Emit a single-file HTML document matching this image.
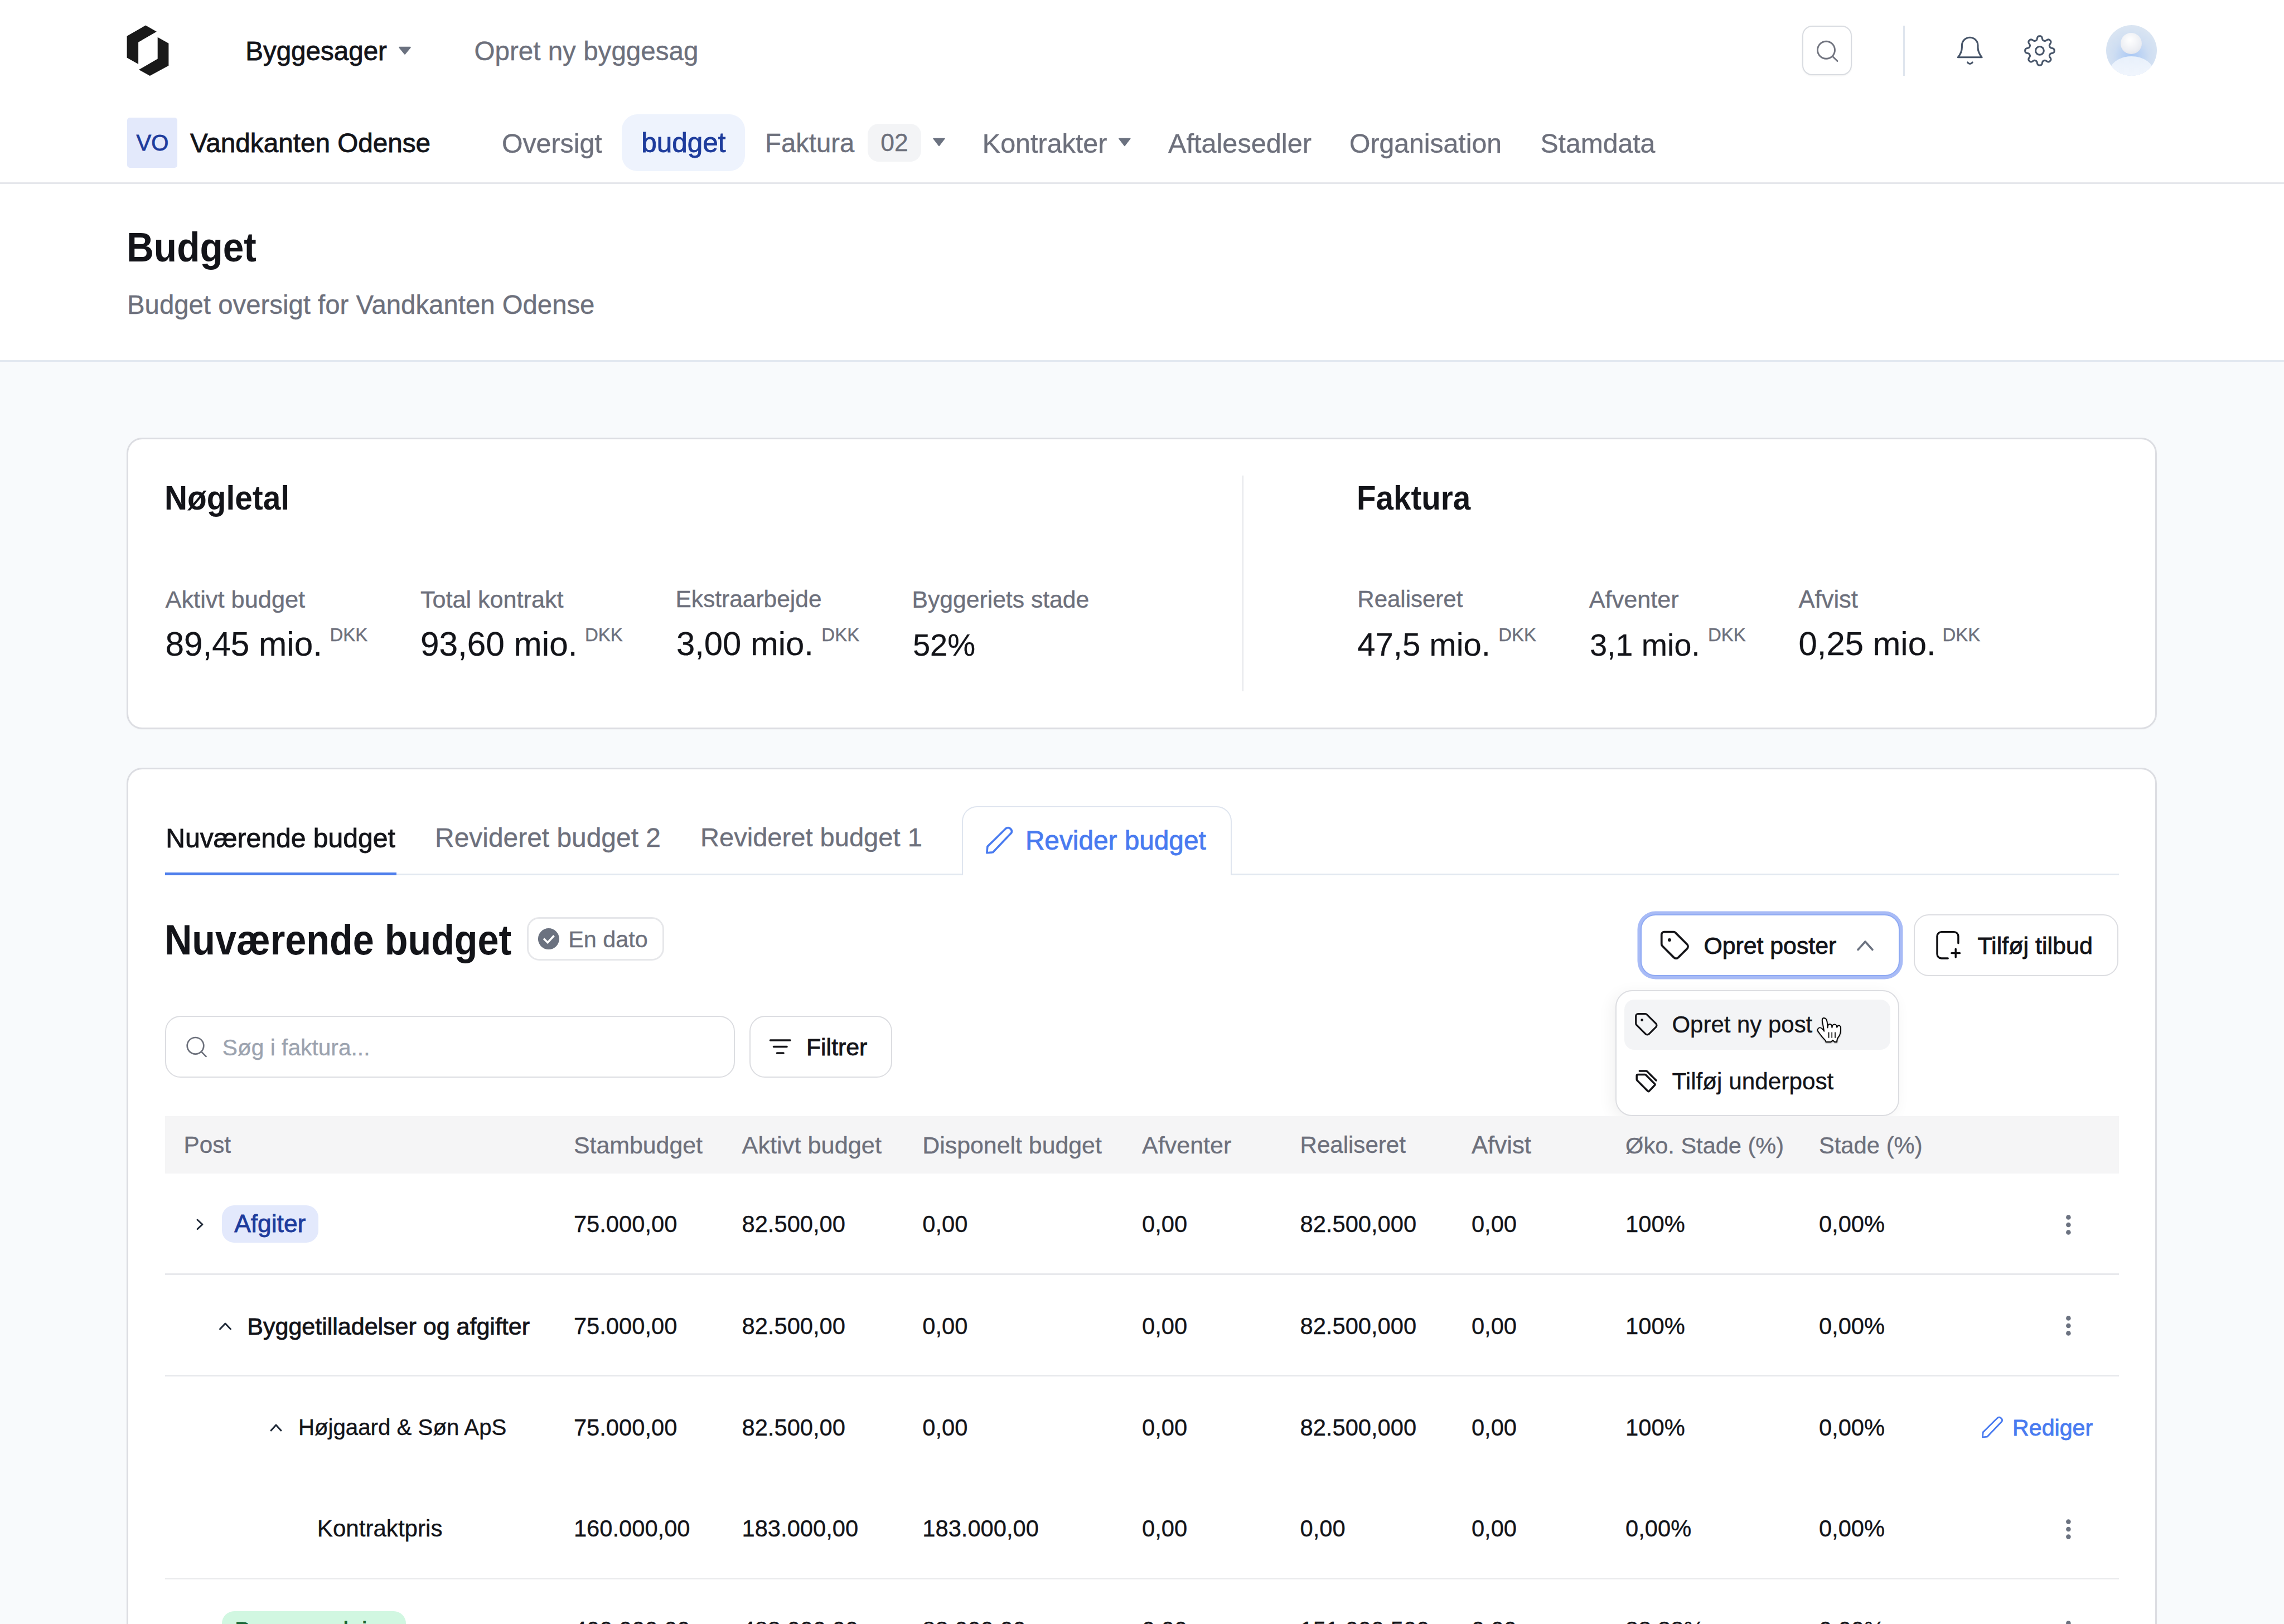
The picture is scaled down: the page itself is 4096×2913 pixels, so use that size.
<!DOCTYPE html>
<html><head><meta charset="utf-8"><style>
html,body{margin:0;padding:0;}
body{width:4096px;height:2913px;overflow:hidden;position:relative;background:#f8fafc;font-family:"Liberation Sans",sans-serif;}
.t{position:absolute;line-height:0;white-space:nowrap;height:0;z-index:6;}
.b{position:absolute;box-sizing:border-box;}
svg.b{overflow:visible;z-index:6;}
</style></head><body>
<div class="b" style="left:0.0px;top:0.0px;width:4096.0px;height:647.0px;background:#ffffff;"></div>
<div class="b" style="left:0.0px;top:327.0px;width:4096.0px;height:3.0px;background:#e5e7eb;"></div>
<div class="b" style="left:0.0px;top:645.5px;width:4096.0px;height:3.0px;background:#e2e8f0;"></div>
<svg class="b" style="left:0.0px;top:0.0px;" width="400.0" height="200.0" viewBox="0 0 400 200"><polygon fill="#1a1a1a" points="261.2,45.5 280.9,56.8 248.1,75.7 248.1,115.1 227.6,103.5 227.6,64.7"/><polygon fill="#1a1a1a" points="282.7,66.8 302.4,77.8 302.4,117.7 268.8,136.1 249.1,125.1 282.7,105.6"/></svg>
<div class="t" style="left:440.20px;top:91.82px;font-size:47.55px;color:#131419;-webkit-text-stroke:0.85px #131419;">Byggesager</div>
<svg class="b" style="left:700.0px;top:70.0px;" width="60.0" height="40.0" viewBox="700 70 60 40"><polygon fill="#6b7280" points="716.5,85 735.5,85 726,96.5" stroke="#6b7280" stroke-width="2.5" stroke-linejoin="round"/></svg>
<div class="t" style="left:850.40px;top:91.80px;font-size:47.60px;color:#6d707c;-webkit-text-stroke:0.40px #6d707c;">Opret ny byggesag</div>
<div class="b" style="left:3232.0px;top:46.0px;width:89.0px;height:89.0px;border:2.5px solid #d9dce1;border-radius:18px;background:#fff;box-shadow:0 1px 3px rgba(0,0,0,0.06);"></div>
<svg class="b" style="left:3200.0px;top:30.0px;" width="200.0" height="130.0" viewBox="3200 30 200 130"><circle cx="3275" cy="89.8" r="15.5" fill="none" stroke="#71747f" stroke-width="2.9"/><line x1="3286.5" y1="101.3" x2="3295" y2="109.5" stroke="#71747f" stroke-width="2.9" stroke-linecap="round"/></svg>
<div class="b" style="left:3413.0px;top:46.0px;width:3.0px;height:90.0px;background:#dfe5ee;"></div>
<svg class="b" style="left:3480.0px;top:40.0px;" width="120.0" height="100.0" viewBox="3480 40 120 100"><path d="M3511.4,102.7 H3554.1 M3511.4,102.7 C3516.5,96.5 3518.4,91 3518.4,85 V81.5 A14.3,14.3 0 0 1 3547,81.5 V85 C3547,91 3549,96.5 3554.1,102.7 M3528.5,111.9 Q3532.8,117 3537.2,111.9" fill="none" stroke="#475569" stroke-width="3.1" stroke-linecap="round" stroke-linejoin="round"/></svg>
<svg class="b" style="left:3600.0px;top:40.0px;" width="120.0" height="100.0" viewBox="3600 40 120 100"><polygon points="3684.10,90.90 3684.10,91.13 3684.09,91.36 3684.07,91.59 3684.05,91.81 3684.02,92.04 3683.98,92.27 3683.93,92.49 3683.87,92.72 3683.79,92.94 3683.71,93.16 3683.60,93.37 3683.47,93.59 3683.32,93.80 3683.14,94.00 3682.93,94.20 3682.69,94.38 3682.41,94.56 3682.09,94.73 3681.73,94.89 3681.34,95.03 3680.92,95.17 3680.48,95.29 3680.04,95.40 3679.60,95.51 3679.18,95.62 3678.79,95.72 3678.43,95.83 3678.10,95.94 3677.81,96.05 3677.56,96.17 3677.33,96.29 3677.14,96.42 3676.97,96.55 3676.82,96.68 3676.68,96.82 3676.57,96.96 3676.46,97.11 3676.36,97.26 3676.27,97.41 3676.19,97.56 3676.11,97.71 3676.03,97.86 3675.96,98.01 3675.89,98.17 3675.82,98.32 3675.76,98.48 3675.70,98.64 3675.64,98.80 3675.59,98.96 3675.54,99.12 3675.49,99.29 3675.45,99.46 3675.41,99.63 3675.39,99.81 3675.37,99.99 3675.37,100.19 3675.38,100.39 3675.40,100.60 3675.45,100.83 3675.52,101.08 3675.62,101.34 3675.75,101.62 3675.90,101.93 3676.08,102.26 3676.29,102.61 3676.51,102.98 3676.74,103.37 3676.97,103.76 3677.19,104.16 3677.40,104.55 3677.57,104.93 3677.71,105.29 3677.82,105.64 3677.89,105.97 3677.93,106.27 3677.94,106.56 3677.92,106.83 3677.88,107.08 3677.82,107.32 3677.74,107.55 3677.65,107.77 3677.55,107.98 3677.43,108.18 3677.31,108.37 3677.17,108.56 3677.03,108.74 3676.89,108.92 3676.74,109.09 3676.59,109.26 3676.43,109.43 3676.26,109.59 3676.09,109.74 3675.92,109.89 3675.74,110.03 3675.56,110.17 3675.37,110.31 3675.18,110.43 3674.98,110.55 3674.77,110.65 3674.55,110.74 3674.32,110.82 3674.08,110.88 3673.83,110.92 3673.56,110.94 3673.27,110.93 3672.97,110.89 3672.64,110.82 3672.29,110.71 3671.93,110.57 3671.55,110.40 3671.16,110.19 3670.76,109.97 3670.37,109.74 3669.98,109.51 3669.61,109.29 3669.26,109.08 3668.93,108.90 3668.62,108.75 3668.34,108.62 3668.08,108.52 3667.83,108.45 3667.60,108.40 3667.39,108.38 3667.19,108.37 3666.99,108.37 3666.81,108.39 3666.63,108.41 3666.46,108.45 3666.29,108.49 3666.12,108.54 3665.96,108.59 3665.80,108.64 3665.64,108.70 3665.48,108.76 3665.32,108.82 3665.17,108.89 3665.01,108.96 3664.86,109.03 3664.71,109.11 3664.56,109.19 3664.41,109.27 3664.26,109.36 3664.11,109.46 3663.96,109.57 3663.82,109.68 3663.68,109.82 3663.55,109.97 3663.42,110.14 3663.29,110.33 3663.17,110.56 3663.05,110.81 3662.94,111.10 3662.83,111.43 3662.72,111.79 3662.62,112.18 3662.51,112.60 3662.40,113.04 3662.29,113.48 3662.17,113.92 3662.03,114.34 3661.89,114.73 3661.73,115.09 3661.56,115.41 3661.38,115.69 3661.20,115.93 3661.00,116.14 3660.80,116.32 3660.59,116.47 3660.37,116.60 3660.16,116.71 3659.94,116.79 3659.72,116.87 3659.49,116.93 3659.27,116.98 3659.04,117.02 3658.81,117.05 3658.59,117.07 3658.36,117.09 3658.13,117.10 3657.90,117.10 3657.67,117.10 3657.44,117.09 3657.21,117.07 3656.99,117.05 3656.76,117.02 3656.53,116.98 3656.31,116.93 3656.08,116.87 3655.86,116.79 3655.64,116.71 3655.43,116.60 3655.21,116.47 3655.00,116.32 3654.80,116.14 3654.60,115.93 3654.42,115.69 3654.24,115.41 3654.07,115.09 3653.91,114.73 3653.77,114.34 3653.63,113.92 3653.51,113.48 3653.40,113.04 3653.29,112.60 3653.18,112.18 3653.08,111.79 3652.97,111.43 3652.86,111.10 3652.75,110.81 3652.63,110.56 3652.51,110.33 3652.38,110.14 3652.25,109.97 3652.12,109.82 3651.98,109.68 3651.84,109.57 3651.69,109.46 3651.54,109.36 3651.39,109.27 3651.24,109.19 3651.09,109.11 3650.94,109.03 3650.79,108.96 3650.63,108.89 3650.48,108.82 3650.32,108.76 3650.16,108.70 3650.00,108.64 3649.84,108.59 3649.68,108.54 3649.51,108.49 3649.34,108.45 3649.17,108.41 3648.99,108.39 3648.81,108.37 3648.61,108.37 3648.41,108.38 3648.20,108.40 3647.97,108.45 3647.72,108.52 3647.46,108.62 3647.18,108.75 3646.87,108.90 3646.54,109.08 3646.19,109.29 3645.82,109.51 3645.43,109.74 3645.04,109.97 3644.64,110.19 3644.25,110.40 3643.87,110.57 3643.51,110.71 3643.16,110.82 3642.83,110.89 3642.53,110.93 3642.24,110.94 3641.97,110.92 3641.72,110.88 3641.48,110.82 3641.25,110.74 3641.03,110.65 3640.82,110.55 3640.62,110.43 3640.43,110.31 3640.24,110.17 3640.06,110.03 3639.88,109.89 3639.71,109.74 3639.54,109.59 3639.37,109.43 3639.21,109.26 3639.06,109.09 3638.91,108.92 3638.77,108.74 3638.63,108.56 3638.49,108.37 3638.37,108.18 3638.25,107.98 3638.15,107.77 3638.06,107.55 3637.98,107.32 3637.92,107.08 3637.88,106.83 3637.86,106.56 3637.87,106.27 3637.91,105.97 3637.98,105.64 3638.09,105.29 3638.23,104.93 3638.40,104.55 3638.61,104.16 3638.83,103.76 3639.06,103.37 3639.29,102.98 3639.51,102.61 3639.72,102.26 3639.90,101.93 3640.05,101.62 3640.18,101.34 3640.28,101.08 3640.35,100.83 3640.40,100.60 3640.42,100.39 3640.43,100.19 3640.43,99.99 3640.41,99.81 3640.39,99.63 3640.35,99.46 3640.31,99.29 3640.26,99.12 3640.21,98.96 3640.16,98.80 3640.10,98.64 3640.04,98.48 3639.98,98.32 3639.91,98.17 3639.84,98.01 3639.77,97.86 3639.69,97.71 3639.61,97.56 3639.53,97.41 3639.44,97.26 3639.34,97.11 3639.23,96.96 3639.12,96.82 3638.98,96.68 3638.83,96.55 3638.66,96.42 3638.47,96.29 3638.24,96.17 3637.99,96.05 3637.70,95.94 3637.37,95.83 3637.01,95.72 3636.62,95.62 3636.20,95.51 3635.76,95.40 3635.32,95.29 3634.88,95.17 3634.46,95.03 3634.07,94.89 3633.71,94.73 3633.39,94.56 3633.11,94.38 3632.87,94.20 3632.66,94.00 3632.48,93.80 3632.33,93.59 3632.20,93.37 3632.09,93.16 3632.01,92.94 3631.93,92.72 3631.87,92.49 3631.82,92.27 3631.78,92.04 3631.75,91.81 3631.73,91.59 3631.71,91.36 3631.70,91.13 3631.70,90.90 3631.70,90.67 3631.71,90.44 3631.73,90.21 3631.75,89.99 3631.78,89.76 3631.82,89.53 3631.87,89.31 3631.93,89.08 3632.01,88.86 3632.09,88.64 3632.20,88.43 3632.33,88.21 3632.48,88.00 3632.66,87.80 3632.87,87.60 3633.11,87.42 3633.39,87.24 3633.71,87.07 3634.07,86.91 3634.46,86.77 3634.88,86.63 3635.32,86.51 3635.76,86.40 3636.20,86.29 3636.62,86.18 3637.01,86.08 3637.37,85.97 3637.70,85.86 3637.99,85.75 3638.24,85.63 3638.47,85.51 3638.66,85.38 3638.83,85.25 3638.98,85.12 3639.12,84.98 3639.23,84.84 3639.34,84.69 3639.44,84.54 3639.53,84.39 3639.61,84.24 3639.69,84.09 3639.77,83.94 3639.84,83.79 3639.91,83.63 3639.98,83.48 3640.04,83.32 3640.10,83.16 3640.16,83.00 3640.21,82.84 3640.26,82.68 3640.31,82.51 3640.35,82.34 3640.39,82.17 3640.41,81.99 3640.43,81.81 3640.43,81.61 3640.42,81.41 3640.40,81.20 3640.35,80.97 3640.28,80.72 3640.18,80.46 3640.05,80.18 3639.90,79.87 3639.72,79.54 3639.51,79.19 3639.29,78.82 3639.06,78.43 3638.83,78.04 3638.61,77.64 3638.40,77.25 3638.23,76.87 3638.09,76.51 3637.98,76.16 3637.91,75.83 3637.87,75.53 3637.86,75.24 3637.88,74.97 3637.92,74.72 3637.98,74.48 3638.06,74.25 3638.15,74.03 3638.25,73.82 3638.37,73.62 3638.49,73.43 3638.63,73.24 3638.77,73.06 3638.91,72.88 3639.06,72.71 3639.21,72.54 3639.37,72.37 3639.54,72.21 3639.71,72.06 3639.88,71.91 3640.06,71.77 3640.24,71.63 3640.43,71.49 3640.62,71.37 3640.82,71.25 3641.03,71.15 3641.25,71.06 3641.48,70.98 3641.72,70.92 3641.97,70.88 3642.24,70.86 3642.53,70.87 3642.83,70.91 3643.16,70.98 3643.51,71.09 3643.87,71.23 3644.25,71.40 3644.64,71.61 3645.04,71.83 3645.43,72.06 3645.82,72.29 3646.19,72.51 3646.54,72.72 3646.87,72.90 3647.18,73.05 3647.46,73.18 3647.72,73.28 3647.97,73.35 3648.20,73.40 3648.41,73.42 3648.61,73.43 3648.81,73.43 3648.99,73.41 3649.17,73.39 3649.34,73.35 3649.51,73.31 3649.68,73.26 3649.84,73.21 3650.00,73.16 3650.16,73.10 3650.32,73.04 3650.48,72.98 3650.63,72.91 3650.79,72.84 3650.94,72.77 3651.09,72.69 3651.24,72.61 3651.39,72.53 3651.54,72.44 3651.69,72.34 3651.84,72.23 3651.98,72.12 3652.12,71.98 3652.25,71.83 3652.38,71.66 3652.51,71.47 3652.63,71.24 3652.75,70.99 3652.86,70.70 3652.97,70.37 3653.08,70.01 3653.18,69.62 3653.29,69.20 3653.40,68.76 3653.51,68.32 3653.63,67.88 3653.77,67.46 3653.91,67.07 3654.07,66.71 3654.24,66.39 3654.42,66.11 3654.60,65.87 3654.80,65.66 3655.00,65.48 3655.21,65.33 3655.43,65.20 3655.64,65.09 3655.86,65.01 3656.08,64.93 3656.31,64.87 3656.53,64.82 3656.76,64.78 3656.99,64.75 3657.21,64.73 3657.44,64.71 3657.67,64.70 3657.90,64.70 3658.13,64.70 3658.36,64.71 3658.59,64.73 3658.81,64.75 3659.04,64.78 3659.27,64.82 3659.49,64.87 3659.72,64.93 3659.94,65.01 3660.16,65.09 3660.37,65.20 3660.59,65.33 3660.80,65.48 3661.00,65.66 3661.20,65.87 3661.38,66.11 3661.56,66.39 3661.73,66.71 3661.89,67.07 3662.03,67.46 3662.17,67.88 3662.29,68.32 3662.40,68.76 3662.51,69.20 3662.62,69.62 3662.72,70.01 3662.83,70.37 3662.94,70.70 3663.05,70.99 3663.17,71.24 3663.29,71.47 3663.42,71.66 3663.55,71.83 3663.68,71.98 3663.82,72.12 3663.96,72.23 3664.11,72.34 3664.26,72.44 3664.41,72.53 3664.56,72.61 3664.71,72.69 3664.86,72.77 3665.01,72.84 3665.17,72.91 3665.32,72.98 3665.48,73.04 3665.64,73.10 3665.80,73.16 3665.96,73.21 3666.12,73.26 3666.29,73.31 3666.46,73.35 3666.63,73.39 3666.81,73.41 3666.99,73.43 3667.19,73.43 3667.39,73.42 3667.60,73.40 3667.83,73.35 3668.08,73.28 3668.34,73.18 3668.62,73.05 3668.93,72.90 3669.26,72.72 3669.61,72.51 3669.98,72.29 3670.37,72.06 3670.76,71.83 3671.16,71.61 3671.55,71.40 3671.93,71.23 3672.29,71.09 3672.64,70.98 3672.97,70.91 3673.27,70.87 3673.56,70.86 3673.83,70.88 3674.08,70.92 3674.32,70.98 3674.55,71.06 3674.77,71.15 3674.98,71.25 3675.18,71.37 3675.37,71.49 3675.56,71.63 3675.74,71.77 3675.92,71.91 3676.09,72.06 3676.26,72.21 3676.43,72.37 3676.59,72.54 3676.74,72.71 3676.89,72.88 3677.03,73.06 3677.17,73.24 3677.31,73.43 3677.43,73.62 3677.55,73.82 3677.65,74.03 3677.74,74.25 3677.82,74.48 3677.88,74.72 3677.92,74.97 3677.94,75.24 3677.93,75.53 3677.89,75.83 3677.82,76.16 3677.71,76.51 3677.57,76.87 3677.40,77.25 3677.19,77.64 3676.97,78.04 3676.74,78.43 3676.51,78.82 3676.29,79.19 3676.08,79.54 3675.90,79.87 3675.75,80.18 3675.62,80.46 3675.52,80.72 3675.45,80.97 3675.40,81.20 3675.38,81.41 3675.37,81.61 3675.37,81.81 3675.39,81.99 3675.41,82.17 3675.45,82.34 3675.49,82.51 3675.54,82.68 3675.59,82.84 3675.64,83.00 3675.70,83.16 3675.76,83.32 3675.82,83.48 3675.89,83.63 3675.96,83.79 3676.03,83.94 3676.11,84.09 3676.19,84.24 3676.27,84.39 3676.36,84.54 3676.46,84.69 3676.57,84.84 3676.68,84.98 3676.82,85.12 3676.97,85.25 3677.14,85.38 3677.33,85.51 3677.56,85.63 3677.81,85.75 3678.10,85.86 3678.43,85.97 3678.79,86.08 3679.18,86.18 3679.60,86.29 3680.04,86.40 3680.48,86.51 3680.92,86.63 3681.34,86.77 3681.73,86.91 3682.09,87.07 3682.41,87.24 3682.69,87.42 3682.93,87.60 3683.14,87.80 3683.32,88.00 3683.47,88.21 3683.60,88.43 3683.71,88.64 3683.79,88.86 3683.87,89.08 3683.93,89.31 3683.98,89.53 3684.02,89.76 3684.05,89.99 3684.07,90.21 3684.09,90.44 3684.10,90.67" fill="none" stroke="#475569" stroke-width="3.1" stroke-linejoin="round"/><circle cx="3657.9" cy="90.9" r="7.4" fill="none" stroke="#475569" stroke-width="3.1"/></svg>
<div class="b" style="left:3777px;top:45px;width:91px;height:91px;border-radius:50%;overflow:hidden;background:radial-gradient(circle at 50% 62%, #a9c8f5 0%, #cfdef2 45%, #dae5f2 75%);"><div style="position:absolute;left:26px;top:14px;width:38px;height:38px;border-radius:50%;background:radial-gradient(circle at 45% 35%, #ffffff 0%, #eceef3 60%, #d9dde6 100%);"></div><div style="position:absolute;left:5px;top:56px;width:81px;height:60px;border-radius:50% 50% 0 0;background:linear-gradient(#e8f0fb, #f7faff);"></div></div>
<div class="b" style="left:228.0px;top:210.5px;width:90.0px;height:90.5px;background:#e3e9fb;border-radius:5px;"></div>
<div class="t" style="left:244.50px;top:256.13px;font-size:40.00px;color:#1e3c9c;-webkit-text-stroke:0.85px #1e3c9c;">VO</div>
<div class="t" style="left:341.10px;top:256.97px;font-size:47.67px;color:#131419;-webkit-text-stroke:0.85px #131419;">Vandkanten Odense</div>
<div class="t" style="left:899.90px;top:256.76px;font-size:48.30px;color:#6d707c;-webkit-text-stroke:0.40px #6d707c;">Oversigt</div>
<div class="b" style="left:1115.3px;top:205.3px;width:221.1px;height:101.6px;background:#eef3fd;border-radius:28px;"></div>
<div class="t" style="left:1150.20px;top:256.04px;font-size:49.48px;color:#1e3c9c;-webkit-text-stroke:0.85px #1e3c9c;">budget</div>
<div class="t" style="left:1372.10px;top:257.13px;font-size:47.22px;color:#6d707c;-webkit-text-stroke:0.40px #6d707c;">Faktura</div>
<div class="b" style="left:1556.2px;top:221.5px;width:96.3px;height:68.3px;background:#f3f4f6;border-radius:20px;"></div>
<div class="t" style="left:1579.20px;top:255.61px;font-size:44.40px;color:#6d707c;-webkit-text-stroke:0.40px #6d707c;">02</div>
<svg class="b" style="left:1660.0px;top:240.0px;" width="50.0" height="30.0" viewBox="1660 240 50 30"><polygon fill="#6b7280" points="1674,248.5 1694,248.5 1684,261.5" stroke="#6b7280" stroke-width="1.5" stroke-linejoin="round"/></svg>
<div class="t" style="left:1761.80px;top:256.69px;font-size:48.48px;color:#6d707c;-webkit-text-stroke:0.40px #6d707c;">Kontrakter</div>
<svg class="b" style="left:1995.0px;top:240.0px;" width="45.0" height="30.0" viewBox="1995 240 45 30"><polygon fill="#6b7280" points="2006.8,248.5 2026.8,248.5 2016.8,261.5" stroke="#6b7280" stroke-width="1.5" stroke-linejoin="round"/></svg>
<div class="t" style="left:2095.00px;top:256.63px;font-size:48.67px;color:#6d707c;-webkit-text-stroke:0.40px #6d707c;">Aftalesedler</div>
<div class="t" style="left:2420.00px;top:256.81px;font-size:48.15px;color:#6d707c;-webkit-text-stroke:0.40px #6d707c;">Organisation</div>
<div class="t" style="left:2762.50px;top:256.82px;font-size:48.10px;color:#6d707c;-webkit-text-stroke:0.40px #6d707c;">Stamdata</div>
<div class="t" style="left:226.50px;top:444.40px;font-size:73.26px;color:#131419;font-weight:700;transform:scaleX(0.9232);transform-origin:0 0;">Budget</div>
<div class="t" style="left:228.00px;top:546.79px;font-size:47.34px;color:#6d707c;-webkit-text-stroke:0.40px #6d707c;">Budget oversigt for Vandkanten Odense</div>
<div class="b" style="left:227.4px;top:784.7px;width:3641.1px;height:523.8px;background:#fff;border:3px solid #dcdde2;border-radius:28px;box-shadow:0 1px 2px rgba(0,0,0,0.03);"></div>
<div class="b" style="left:2227.5px;top:853.0px;width:2.5px;height:387.0px;background:#e5e7eb;"></div>
<div class="t" style="left:294.90px;top:892.68px;font-size:61.48px;color:#131419;font-weight:700;transform:scaleX(0.9239);transform-origin:0 0;">Nøgletal</div>
<div class="t" style="left:2432.80px;top:892.68px;font-size:61.48px;color:#131419;font-weight:700;transform:scaleX(0.9197);transform-origin:0 0;">Faktura</div>
<div class="t" style="left:296.50px;top:1074.57px;font-size:43.36px;color:#6d707c;-webkit-text-stroke:0.40px #6d707c;">Aktivt budget</div>
<div class="t" style="left:296.50px;top:1155.10px;font-size:60.28px;color:#131419;-webkit-text-stroke:0.25px #131419;">89,45 mio.</div>
<div class="t" style="left:591.50px;top:1138.56px;font-size:33.00px;color:#6d707c;-webkit-text-stroke:0.40px #6d707c;">DKK</div>
<div class="t" style="left:753.90px;top:1074.64px;font-size:43.17px;color:#6d707c;-webkit-text-stroke:0.40px #6d707c;">Total kontrakt</div>
<div class="t" style="left:753.90px;top:1155.10px;font-size:60.30px;color:#131419;-webkit-text-stroke:0.25px #131419;">93,60 mio.</div>
<div class="t" style="left:1049.00px;top:1138.56px;font-size:33.00px;color:#6d707c;-webkit-text-stroke:0.40px #6d707c;">DKK</div>
<div class="t" style="left:1211.50px;top:1074.87px;font-size:42.48px;color:#6d707c;-webkit-text-stroke:0.40px #6d707c;">Ekstraarbejde</div>
<div class="t" style="left:1212.90px;top:1155.25px;font-size:59.84px;color:#131419;-webkit-text-stroke:0.25px #131419;">3,00 mio.</div>
<div class="t" style="left:1473.30px;top:1138.56px;font-size:33.00px;color:#6d707c;-webkit-text-stroke:0.40px #6d707c;">DKK</div>
<div class="t" style="left:1635.50px;top:1074.81px;font-size:42.66px;color:#6d707c;-webkit-text-stroke:0.40px #6d707c;">Byggeriets stade</div>
<div class="t" style="left:1636.90px;top:1156.56px;font-size:56.08px;color:#131419;-webkit-text-stroke:0.25px #131419;">52%</div>
<div class="t" style="left:2434.30px;top:1075.04px;font-size:42.01px;color:#6d707c;-webkit-text-stroke:0.40px #6d707c;">Realiseret</div>
<div class="t" style="left:2434.30px;top:1155.88px;font-size:58.04px;color:#131419;-webkit-text-stroke:0.25px #131419;">47,5 mio.</div>
<div class="t" style="left:2687.20px;top:1138.56px;font-size:33.00px;color:#6d707c;-webkit-text-stroke:0.40px #6d707c;">DKK</div>
<div class="t" style="left:2849.80px;top:1074.62px;font-size:43.22px;color:#6d707c;-webkit-text-stroke:0.40px #6d707c;">Afventer</div>
<div class="t" style="left:2851.20px;top:1156.74px;font-size:55.54px;color:#131419;-webkit-text-stroke:0.25px #131419;">3,1 mio.</div>
<div class="t" style="left:3063.00px;top:1138.56px;font-size:33.00px;color:#6d707c;-webkit-text-stroke:0.40px #6d707c;">DKK</div>
<div class="t" style="left:3225.50px;top:1074.51px;font-size:43.54px;color:#6d707c;-webkit-text-stroke:0.40px #6d707c;">Afvist</div>
<div class="t" style="left:3225.50px;top:1155.26px;font-size:59.82px;color:#131419;-webkit-text-stroke:0.25px #131419;">0,25 mio.</div>
<div class="t" style="left:3483.50px;top:1138.56px;font-size:33.00px;color:#6d707c;-webkit-text-stroke:0.40px #6d707c;">DKK</div>
<div class="b" style="left:227.4px;top:1376.9px;width:3641.1px;height:1723.1px;background:#fff;border:3px solid #dcdde2;border-radius:28px;box-shadow:0 1px 2px rgba(0,0,0,0.03);"></div>
<div class="b" style="left:296.0px;top:1567.3px;width:3504.0px;height:2.7px;background:#e2e8f0;"></div>
<div class="b" style="left:295.6px;top:1564.6px;width:415.6px;height:5.4px;background:#4f7fec;"></div>
<div class="t" style="left:297.30px;top:1503.33px;font-size:48.08px;color:#131419;-webkit-text-stroke:0.85px #131419;">Nuværende budget</div>
<div class="t" style="left:780.10px;top:1503.39px;font-size:47.91px;color:#6d707c;-webkit-text-stroke:0.40px #6d707c;">Revideret budget 2</div>
<div class="t" style="left:1256.00px;top:1502.48px;font-size:47.08px;color:#6d707c;-webkit-text-stroke:0.40px #6d707c;">Revideret budget 1</div>
<div class="b" style="left:1725.0px;top:1446.2px;width:484.0px;height:123.8px;background:#fff;border:2.5px solid #dfe5ef;border-bottom:none;border-radius:27px 27px 0 0;"></div>
<svg class="b" style="left:1767.8px;top:1483.0px;" width="49.0" height="49.0" viewBox="0 0 49 49"><path d="M35.9,3 A6.65,6.65 0 0 1 45.9,10.8 L12.6,45.8 L1.8,46.8 L2.9,35.4 Z" fill="none" stroke="#497bf0" stroke-width="3.6" stroke-linejoin="round"/></svg>
<div class="t" style="left:1838.90px;top:1508.24px;font-size:47.76px;color:#497bf0;-webkit-text-stroke:0.85px #497bf0;">Revider budget</div>
<div class="t" style="left:295.00px;top:1685.04px;font-size:76.89px;color:#131419;font-weight:700;transform:scaleX(0.8884);transform-origin:0 0;">Nuværende budget</div>
<div class="b" style="left:944.8px;top:1645.0px;width:246.0px;height:78.2px;border:3px solid #e6e7ea;border-radius:22px;background:#fff;"></div>
<svg class="b" style="left:960.0px;top:1660.0px;" width="50.0" height="50.0" viewBox="960 1660 50 50"><circle cx="983.9" cy="1684.1" r="19" fill="#6b7280"/><path d="M975,1683.5 L982.2,1690.7 L993.5,1678.3" fill="none" stroke="#fff" stroke-width="3.6" stroke-linecap="butt" stroke-linejoin="miter"/></svg>
<div class="t" style="left:1019.20px;top:1684.95px;font-size:41.39px;color:#6d707c;-webkit-text-stroke:0.40px #6d707c;">En dato</div>
<div class="b" style="left:2942.0px;top:1639.8px;width:465.0px;height:111.2px;background:#fff;border:2.5px solid #8ea9f3;border-radius:27px;box-shadow:0 0 0 5.5px #a8bbf6;"></div>
<svg class="b" style="left:2975.2px;top:1667.0px;" width="56.8" height="56.8" viewBox="0 0 24 24"><path d="M12.586 2.586A2 2 0 0 0 11.172 2H4a2 2 0 0 0-2 2v7.172a2 2 0 0 0 .586 1.414l8.704 8.704a2.426 2.426 0 0 0 3.42 0l6.58-6.58a2.426 2.426 0 0 0 0-3.42z" fill="none" stroke="#141418" stroke-width="1.58" stroke-linecap="round" stroke-linejoin="round"/><circle cx="8" cy="8" r="1.27" fill="#141418"/></svg>
<div class="t" style="left:3055.40px;top:1695.76px;font-size:42.81px;color:#131419;-webkit-text-stroke:0.85px #131419;">Opret poster</div>
<svg class="b" style="left:3320.0px;top:1675.0px;" width="50.0" height="40.0" viewBox="3320 1675 50 40"><polyline points="3332,1703.5 3345,1689 3358,1703.5" fill="none" stroke="#6b7280" stroke-width="3.6" stroke-linecap="round" stroke-linejoin="round"/></svg>
<div class="b" style="left:3431.6px;top:1639.8px;width:367.8px;height:111.2px;background:#fff;border:2.5px solid #dcdde1;border-radius:27px;"></div>
<svg class="b" style="left:3460.0px;top:1660.0px;" width="70.0" height="70.0" viewBox="3460 1660 70 70"><path d="M3511.9,1691.7 V1679.4 a7.8,7.8 0 0 0 -7.8,-7.8 H3481.8 a7.8,7.8 0 0 0 -7.8,7.8 V1711.2 a7.8,7.8 0 0 0 7.8,7.8 H3493.2 M3507.2,1702.2 V1717 M3499.8,1709.6 H3514.6" fill="none" stroke="#0d0d10" stroke-width="3.4" stroke-linecap="round" stroke-linejoin="round"/></svg>
<div class="t" style="left:3546.40px;top:1695.67px;font-size:43.06px;color:#131419;-webkit-text-stroke:0.85px #131419;">Tilføj tilbud</div>
<div class="b" style="left:296.4px;top:1821.7px;width:1022.0px;height:111.5px;background:#fff;border:2.5px solid #dcdde1;border-radius:28px;"></div>
<svg class="b" style="left:320.0px;top:1850.0px;" width="70.0" height="60.0" viewBox="320 1850 70 60"><circle cx="350.5" cy="1875.8" r="14.8" fill="none" stroke="#6d717c" stroke-width="2.7"/><line x1="361.2" y1="1886.6" x2="369.5" y2="1895" stroke="#6d717c" stroke-width="2.7" stroke-linecap="round"/></svg>
<div class="t" style="left:398.80px;top:1878.59px;font-size:40.71px;color:#9ca3af;-webkit-text-stroke:0.40px #9ca3af;">Søg i faktura...</div>
<div class="b" style="left:1343.6px;top:1821.7px;width:256.4px;height:111.5px;background:#fff;border:2.5px solid #dcdde1;border-radius:28px;"></div>
<svg class="b" style="left:1370.0px;top:1855.0px;" width="60.0" height="45.0" viewBox="1370 1855 60 45"><path d="M1381.5,1866 H1417 M1387.5,1877.5 H1411 M1393.5,1889 H1405" fill="none" stroke="#141418" stroke-width="3.6" stroke-linecap="round"/></svg>
<div class="t" style="left:1446.00px;top:1877.87px;font-size:42.78px;color:#131419;-webkit-text-stroke:0.85px #131419;">Filtrer</div>
<div class="b" style="left:295.5px;top:2002.4px;width:3504.9px;height:102.4px;background:#f5f5f6;z-index:5;"></div>
<div class="t" style="left:329.50px;top:2054.34px;font-size:42.27px;color:#6d707c;-webkit-text-stroke:0.40px #6d707c;">Post</div>
<div class="t" style="left:1028.90px;top:2054.14px;font-size:42.86px;color:#6d707c;-webkit-text-stroke:0.40px #6d707c;">Stambudget</div>
<div class="t" style="left:1330.50px;top:2053.98px;font-size:43.33px;color:#6d707c;-webkit-text-stroke:0.40px #6d707c;">Aktivt budget</div>
<div class="t" style="left:1654.30px;top:2054.14px;font-size:42.85px;color:#6d707c;-webkit-text-stroke:0.40px #6d707c;">Disponelt budget</div>
<div class="t" style="left:2048.10px;top:2054.08px;font-size:43.03px;color:#6d707c;-webkit-text-stroke:0.40px #6d707c;">Afventer</div>
<div class="t" style="left:2331.50px;top:2054.42px;font-size:42.07px;color:#6d707c;-webkit-text-stroke:0.40px #6d707c;">Realiseret</div>
<div class="t" style="left:2638.90px;top:2053.81px;font-size:43.82px;color:#6d707c;-webkit-text-stroke:0.40px #6d707c;">Afvist</div>
<div class="t" style="left:2915.10px;top:2054.59px;font-size:41.56px;color:#6d707c;-webkit-text-stroke:0.40px #6d707c;">Øko. Stade (%)</div>
<div class="t" style="left:3261.90px;top:2054.52px;font-size:41.77px;color:#6d707c;-webkit-text-stroke:0.40px #6d707c;">Stade (%)</div>
<svg class="b" style="left:340.0px;top:2175.0px;" width="40.0" height="45.0" viewBox="340 2175 40 45"><polyline points="354,2188 363,2196.3 354,2204.6" fill="none" stroke="#1f2937" stroke-width="2.9" stroke-linecap="round" stroke-linejoin="round"/></svg>
<div class="b" style="left:398.0px;top:2162.2px;width:173.0px;height:67.2px;background:#e3e9fc;border-radius:22px;"></div>
<div class="t" style="left:420.20px;top:2195.33px;font-size:44.33px;color:#1e3c9c;-webkit-text-stroke:0.85px #1e3c9c;">Afgiter</div>
<div class="t" style="left:1028.90px;top:2196.24px;font-size:41.70px;color:#131419;-webkit-text-stroke:0.40px #131419;">75.000,00</div>
<div class="t" style="left:1330.50px;top:2196.24px;font-size:41.70px;color:#131419;-webkit-text-stroke:0.40px #131419;">82.500,00</div>
<div class="t" style="left:1654.30px;top:2196.24px;font-size:41.70px;color:#131419;-webkit-text-stroke:0.40px #131419;">0,00</div>
<div class="t" style="left:2048.10px;top:2196.24px;font-size:41.70px;color:#131419;-webkit-text-stroke:0.40px #131419;">0,00</div>
<div class="t" style="left:2331.50px;top:2196.24px;font-size:41.70px;color:#131419;-webkit-text-stroke:0.40px #131419;">82.500,000</div>
<div class="t" style="left:2638.90px;top:2196.24px;font-size:41.70px;color:#131419;-webkit-text-stroke:0.40px #131419;">0,00</div>
<div class="t" style="left:2915.10px;top:2196.24px;font-size:41.70px;color:#131419;-webkit-text-stroke:0.40px #131419;">100%</div>
<div class="t" style="left:3261.90px;top:2196.24px;font-size:41.70px;color:#131419;-webkit-text-stroke:0.40px #131419;">0,00%</div>
<svg class="b" style="left:3690.0px;top:2166.6px;" width="40.0" height="60.0" viewBox="3690 2166.6 40 60"><circle cx="3709.4" cy="2183.1" r="4.3" fill="#6b7280"/><circle cx="3709.4" cy="2196.6" r="4.3" fill="#6b7280"/><circle cx="3709.4" cy="2210.1" r="4.3" fill="#6b7280"/></svg>
<div class="b" style="left:295.5px;top:2284.0px;width:3504.9px;height:2.5px;background:#e8e9ec;"></div>
<svg class="b" style="left:380.0px;top:2360.0px;" width="50.0" height="35.0" viewBox="380 2360 50 35"><polyline points="394.5,2384 404,2374 413.5,2384" fill="none" stroke="#1f2937" stroke-width="3" stroke-linecap="round" stroke-linejoin="round"/></svg>
<div class="t" style="left:443.30px;top:2378.89px;font-size:43.00px;color:#131419;-webkit-text-stroke:0.85px #131419;">Byggetilladelser og afgifter</div>
<div class="t" style="left:1028.90px;top:2379.34px;font-size:41.70px;color:#131419;-webkit-text-stroke:0.40px #131419;">75.000,00</div>
<div class="t" style="left:1330.50px;top:2379.34px;font-size:41.70px;color:#131419;-webkit-text-stroke:0.40px #131419;">82.500,00</div>
<div class="t" style="left:1654.30px;top:2379.34px;font-size:41.70px;color:#131419;-webkit-text-stroke:0.40px #131419;">0,00</div>
<div class="t" style="left:2048.10px;top:2379.34px;font-size:41.70px;color:#131419;-webkit-text-stroke:0.40px #131419;">0,00</div>
<div class="t" style="left:2331.50px;top:2379.34px;font-size:41.70px;color:#131419;-webkit-text-stroke:0.40px #131419;">82.500,000</div>
<div class="t" style="left:2638.90px;top:2379.34px;font-size:41.70px;color:#131419;-webkit-text-stroke:0.40px #131419;">0,00</div>
<div class="t" style="left:2915.10px;top:2379.34px;font-size:41.70px;color:#131419;-webkit-text-stroke:0.40px #131419;">100%</div>
<div class="t" style="left:3261.90px;top:2379.34px;font-size:41.70px;color:#131419;-webkit-text-stroke:0.40px #131419;">0,00%</div>
<svg class="b" style="left:3690.0px;top:2348.2px;" width="40.0" height="60.0" viewBox="3690 2348.2 40 60"><circle cx="3709.4" cy="2364.7" r="4.3" fill="#6b7280"/><circle cx="3709.4" cy="2378.2" r="4.3" fill="#6b7280"/><circle cx="3709.4" cy="2391.7" r="4.3" fill="#6b7280"/></svg>
<div class="b" style="left:295.5px;top:2466.3px;width:3504.9px;height:2.5px;background:#e8e9ec;"></div>
<svg class="b" style="left:470.0px;top:2540.0px;" width="50.0" height="40.0" viewBox="470 2540 50 40"><polyline points="486,2566 495,2556 504,2566" fill="none" stroke="#1f2937" stroke-width="3" stroke-linecap="round" stroke-linejoin="round"/></svg>
<div class="t" style="left:534.90px;top:2561.05px;font-size:40.24px;color:#131419;-webkit-text-stroke:0.40px #131419;">Højgaard &amp; Søn ApS</div>
<div class="t" style="left:1028.90px;top:2560.54px;font-size:41.70px;color:#131419;-webkit-text-stroke:0.40px #131419;">75.000,00</div>
<div class="t" style="left:1330.50px;top:2560.54px;font-size:41.70px;color:#131419;-webkit-text-stroke:0.40px #131419;">82.500,00</div>
<div class="t" style="left:1654.30px;top:2560.54px;font-size:41.70px;color:#131419;-webkit-text-stroke:0.40px #131419;">0,00</div>
<div class="t" style="left:2048.10px;top:2560.54px;font-size:41.70px;color:#131419;-webkit-text-stroke:0.40px #131419;">0,00</div>
<div class="t" style="left:2331.50px;top:2560.54px;font-size:41.70px;color:#131419;-webkit-text-stroke:0.40px #131419;">82.500,000</div>
<div class="t" style="left:2638.90px;top:2560.54px;font-size:41.70px;color:#131419;-webkit-text-stroke:0.40px #131419;">0,00</div>
<div class="t" style="left:2915.10px;top:2560.54px;font-size:41.70px;color:#131419;-webkit-text-stroke:0.40px #131419;">100%</div>
<div class="t" style="left:3261.90px;top:2560.54px;font-size:41.70px;color:#131419;-webkit-text-stroke:0.40px #131419;">0,00%</div>
<svg class="b" style="left:3553.8px;top:2540.5px;" width="38.6" height="38.6" viewBox="0 0 49 49"><path d="M35.9,3 A6.65,6.65 0 0 1 45.9,10.8 L12.6,45.8 L1.8,46.8 L2.9,35.4 Z" fill="none" stroke="#497bf0" stroke-width="3.6" stroke-linejoin="round"/></svg>
<div class="t" style="left:3609.10px;top:2560.74px;font-size:41.14px;color:#497bf0;-webkit-text-stroke:0.85px #497bf0;">Rediger</div>
<div class="t" style="left:568.80px;top:2741.60px;font-size:42.12px;color:#131419;-webkit-text-stroke:0.40px #131419;">Kontraktpris</div>
<div class="t" style="left:1028.90px;top:2741.74px;font-size:41.70px;color:#131419;-webkit-text-stroke:0.40px #131419;">160.000,00</div>
<div class="t" style="left:1330.50px;top:2741.74px;font-size:41.70px;color:#131419;-webkit-text-stroke:0.40px #131419;">183.000,00</div>
<div class="t" style="left:1654.30px;top:2741.74px;font-size:41.70px;color:#131419;-webkit-text-stroke:0.40px #131419;">183.000,00</div>
<div class="t" style="left:2048.10px;top:2741.74px;font-size:41.70px;color:#131419;-webkit-text-stroke:0.40px #131419;">0,00</div>
<div class="t" style="left:2331.50px;top:2741.74px;font-size:41.70px;color:#131419;-webkit-text-stroke:0.40px #131419;">0,00</div>
<div class="t" style="left:2638.90px;top:2741.74px;font-size:41.70px;color:#131419;-webkit-text-stroke:0.40px #131419;">0,00</div>
<div class="t" style="left:2915.10px;top:2741.74px;font-size:41.70px;color:#131419;-webkit-text-stroke:0.40px #131419;">0,00%</div>
<div class="t" style="left:3261.90px;top:2741.74px;font-size:41.70px;color:#131419;-webkit-text-stroke:0.40px #131419;">0,00%</div>
<svg class="b" style="left:3690.0px;top:2712.8px;" width="40.0" height="60.0" viewBox="3690 2712.8 40 60"><circle cx="3709.4" cy="2729.3" r="4.3" fill="#6b7280"/><circle cx="3709.4" cy="2742.8" r="4.3" fill="#6b7280"/><circle cx="3709.4" cy="2756.3" r="4.3" fill="#6b7280"/></svg>
<div class="b" style="left:295.5px;top:2830.8px;width:3504.9px;height:2.5px;background:#e8e9ec;"></div>
<div class="b" style="left:398.0px;top:2890.0px;width:329.5px;height:68.0px;background:#d1f7e1;border-radius:22px;"></div>
<div class="t" style="left:420.90px;top:2923.69px;font-size:42.73px;color:#166534;-webkit-text-stroke:0.85px #166534;">Byggemodning</div>
<div class="t" style="left:1028.90px;top:2924.04px;font-size:41.70px;color:#131419;-webkit-text-stroke:0.40px #131419;">400.000,00</div>
<div class="t" style="left:1330.50px;top:2924.04px;font-size:41.70px;color:#131419;-webkit-text-stroke:0.40px #131419;">483.000,00</div>
<div class="t" style="left:1654.30px;top:2924.04px;font-size:41.70px;color:#131419;-webkit-text-stroke:0.40px #131419;">83.000,00</div>
<div class="t" style="left:2048.10px;top:2924.04px;font-size:41.70px;color:#131419;-webkit-text-stroke:0.40px #131419;">0,00</div>
<div class="t" style="left:2331.50px;top:2924.04px;font-size:41.70px;color:#131419;-webkit-text-stroke:0.40px #131419;">151.000.500</div>
<div class="t" style="left:2638.90px;top:2924.04px;font-size:41.70px;color:#131419;-webkit-text-stroke:0.40px #131419;">0,00</div>
<div class="t" style="left:2915.10px;top:2924.04px;font-size:41.70px;color:#131419;-webkit-text-stroke:0.40px #131419;">33,33%</div>
<div class="t" style="left:3261.90px;top:2924.04px;font-size:41.70px;color:#131419;-webkit-text-stroke:0.40px #131419;">0,00%</div>
<svg class="b" style="left:3690.0px;top:2894.5px;" width="40.0" height="60.0" viewBox="3690 2894.5 40 60"><circle cx="3709.4" cy="2911.0" r="4.3" fill="#6b7280"/><circle cx="3709.4" cy="2924.5" r="4.3" fill="#6b7280"/><circle cx="3709.4" cy="2938.0" r="4.3" fill="#6b7280"/></svg>
<div class="b" style="left:2897.3px;top:1776.3px;width:508.3px;height:225.7px;background:#fff;border:2.5px solid #dcdde1;border-radius:30px;box-shadow:-6px 6px 28px rgba(0,0,0,0.06);z-index:4;"></div>
<div class="b" style="left:2913.0px;top:1792.5px;width:476.8px;height:90.7px;background:#f3f4f6;border-radius:18px;z-index:4;"></div>
<svg class="b" style="left:2929.8px;top:1815.4px;" width="44.6" height="44.6" viewBox="0 0 24 24"><path d="M12.586 2.586A2 2 0 0 0 11.172 2H4a2 2 0 0 0-2 2v7.172a2 2 0 0 0 .586 1.414l8.704 8.704a2.426 2.426 0 0 0 3.42 0l6.58-6.58a2.426 2.426 0 0 0 0-3.42z" fill="none" stroke="#141418" stroke-width="1.75" stroke-linecap="round" stroke-linejoin="round"/><circle cx="7.9" cy="7.9" r="1.3" fill="#141418"/></svg>
<div class="t" style="left:2998.50px;top:1837.86px;font-size:41.95px;color:#131419;-webkit-text-stroke:0.40px #131419;">Opret ny post</div>
<div class="t" style="left:2998.50px;top:1940.24px;font-size:42.29px;color:#131419;-webkit-text-stroke:0.40px #131419;">Tilføj underpost</div>
<svg class="b" style="left:2920.0px;top:1910.0px;" width="60.0" height="60.0" viewBox="2920 1910 60 60"><path d="M2937.2,1927.5 H2949.8 Q2950.9,1927.5 2951.7,1928.3 L2967.3,1943.9 Q2968.7,1945.3 2967.3,1946.7 L2957.7,1956.9 Q2956.3,1958.3 2954.9,1956.9 L2936,1938 Q2935.2,1937.2 2935.2,1936.1 V1929.5 Q2935.2,1927.5 2937.2,1927.5 Z M2940.3,1920.9 H2951.8 Q2952.9,1920.9 2953.7,1921.7 L2970.1,1938" fill="none" stroke="#141418" stroke-width="3.5" stroke-linecap="round" stroke-linejoin="round"/></svg>
<svg class="b" style="left:3245.0px;top:1815.0px;filter:drop-shadow(0 1.5px 1.2px rgba(0,0,0,0.35));" width="70.0" height="65.0" viewBox="0 0 1749 1624"><path d="M640,275 C720,275 775,350 790,450 L815,710 C820,590 860,550 910,550 C970,550 1005,600 1010,710 C1020,600 1060,560 1120,560 C1190,560 1225,620 1230,700 C1250,630 1290,610 1320,610 C1380,615 1400,660 1400,760 C1400,950 1380,1030 1300,1120 C1240,1190 1225,1250 1230,1350 L1130,1350 L1045,1270 L960,1350 L740,1350 C730,1270 700,1250 640,1200 C560,1130 500,1030 380,870 C340,800 390,720 450,710 C530,700 600,770 655,865 L575,420 C560,330 590,275 640,275 Z" fill="#fff" stroke="#000" stroke-width="48" stroke-linejoin="round"/><path d="M865,910 V1170 M1005,910 V1170 M1150,910 V1170" stroke="#000" stroke-width="42"/></svg>
</body></html>
